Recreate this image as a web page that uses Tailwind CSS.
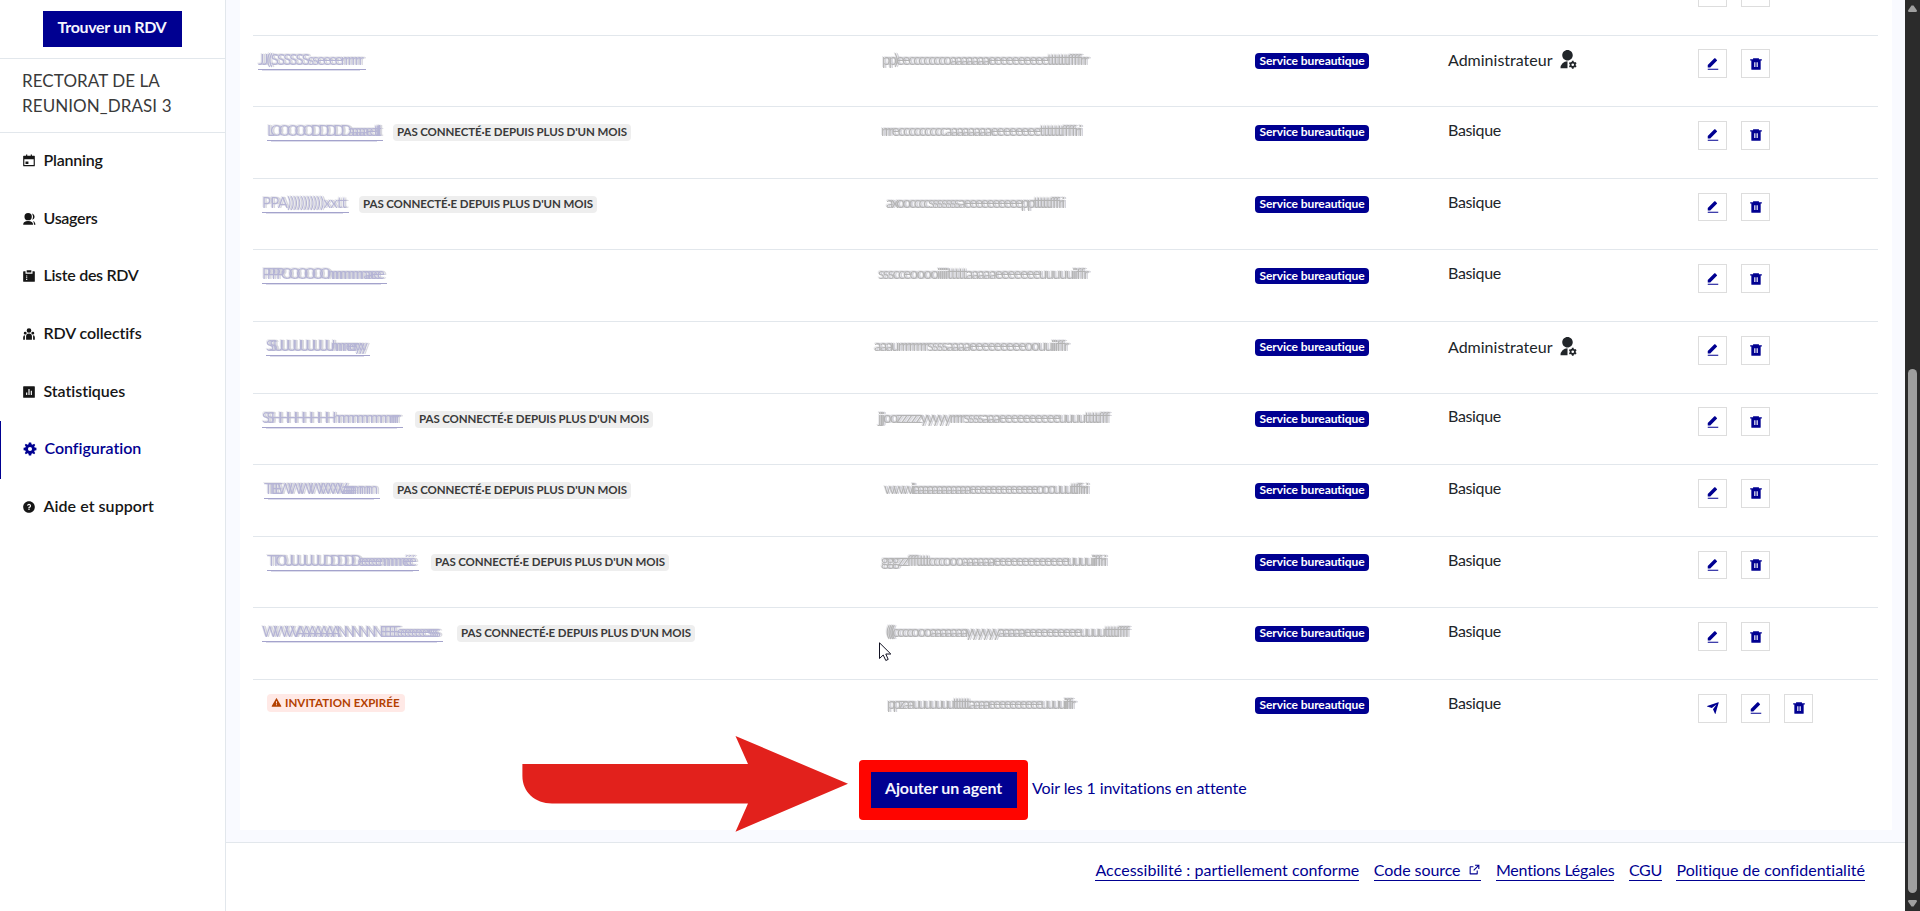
<!DOCTYPE html>
<html lang="fr">
<head>
<title>Agents - RDV Service Public</title>
<meta charset="UTF-8">
<meta name="viewport" content="width=device-width, initial-scale=1.0">
<script src="https://cdn.jsdelivr.net/npm/@tailwindcss/browser@4"></script>
<style>
  body {
    font-family: Lato, 'Open Sans', sans-serif;
    font-variant-ligatures: none;
  }
  .smudge {
    filter: drop-shadow(2px 0.5px 0.3px rgb(60 60 90 / 0.6)) drop-shadow(-1px -1px 0.5px rgb(60 60 90 / 0.3)) blur(0.3px);
  }
</style>
</head>
<body class="flex h-[911px] overflow-hidden bg-white text-base text-[#212529]">

  <!-- Icônes -->
  <svg class="hidden">
    <symbol id="i-calendar" viewBox="0 0 24 24"><path fill-rule="evenodd" d="M17 3h4a1 1 0 0 1 1 1v16a1 1 0 0 1-1 1H3a1 1 0 0 1-1-1V4a1 1 0 0 1 1-1h4V1h2v2h6V1h2v2zM4 9v10h16V9H4zm2 4h5v4H6v-4z"/></symbol>
    <symbol id="i-user" viewBox="0 0 24 24"><circle cx="10.5" cy="8" r="6.3"/><path d="M2 22c0-4.500 3-6.500 8.500-6.500S19 17.500 19 22zM17 2.500c3 1 4.500 3 4.500 5.500s-1.500 4.500-4 5.200c2-3.200 2-7.200-.5-10.700zM19 15.500c2.500 1 4 3.500 4 6.500h-2.500c0-2.500-.3-4.500-1.500-6.500z"/></symbol>
    <symbol id="i-list" viewBox="0 0 24 24"><path fill-rule="evenodd" d="M6 4v4h12V4h3a1 1 0 0 1 1 1v16a1 1 0 0 1-1 1H3a1 1 0 0 1-1-1V5a1 1 0 0 1 1-1h3zm1 13v2h2v-2H7zm0-3v2h2v-2H7zm0-3v2h2v-2H7zM8 2h8v4H8V2z"/></symbol>
    <symbol id="i-team" viewBox="0 0 24 24"><path d="M12 11a5 5 0 0 1 5 5v6H7v-6a5 5 0 0 1 5-5zm-6.700 3A7 7 0 0 0 5 16v6H2v-4.500a3.500 3.500 0 0 1 3.300-3.500zm13.400 0a3.500 3.500 0 0 1 3.300 3.500V22h-3v-6c0-.7-.1-1.400-.3-2zM5.500 8a2.500 2.500 0 1 1 0 5 2.500 2.500 0 0 1 0-5zm13 0a2.500 2.500 0 1 1 0 5 2.500 2.500 0 0 1 0-5zM12 2a4 4 0 1 1 0 8 4 4 0 0 1 0-8z"/></symbol>
    <symbol id="i-stats" viewBox="0 0 24 24"><path fill-rule="evenodd" d="M3 2h18a1 1 0 0 1 1 1v18a1 1 0 0 1-1 1H3a1 1 0 0 1-1-1V3a1 1 0 0 1 1-1zm4 11v4h2v-4H7zm4-6v10h2V7h-2zm4 3v7h2v-7h-2z"/></symbol>
    <symbol id="i-settings" viewBox="0 0 24 24"><path fill-rule="evenodd" d="M10 1h4l.6 3 1.900.8L19 3.100 21 5l-1.800 2.500.8 1.900 3 .6v4l-3 .6-.8 1.900L21 19l-2 2-2.500-1.700-1.900.8L14 23h-4l-.6-2.900-1.900-.8L5 21l-2-2 1.800-2.500-.8-1.900-3-.6v-4l3-.6.8-1.900L3 5l2-1.900 2.500 1.700L9.400 4zm2 14.500a3.500 3.500 0 1 0 0-7 3.500 3.500 0 0 0 0 7z"/></symbol>
    <symbol id="i-question" viewBox="0 0 24 24"><path fill-rule="evenodd" d="M12 22C6.477 22 2 17.523 2 12S6.477 2 12 2s10 4.477 10 10-4.477 10-10 10zm-1-7v2h2v-2h-2zm2-1.645A3.502 3.502 0 0 0 12 6.500a3.501 3.501 0 0 0-3.433 2.813l1.962.393A1.500 1.500 0 1 1 12 11.500a1 1 0 0 0-1 1V14h2v-.645z"/></symbol>
    <symbol id="i-edit" viewBox="0 0 24 24"><path d="M7.243 18H3v-4.243L14.435 2.322a1 1 0 0 1 1.414 0l2.829 2.829a1 1 0 0 1 0 1.414L7.243 18zM3 20h18v2H3v-2z"/></symbol>
    <symbol id="i-delete" viewBox="0 0 24 24"><path fill-rule="evenodd" d="M17 4h5v2h-2v15a1 1 0 0 1-1 1H5a1 1 0 0 1-1-1V6H2V4h5V2h10v2zM9 9v8h2V9H9zm4 0v8h2V9h-2z"/></symbol>
    <symbol id="i-send" viewBox="0 0 24 24"><path d="M1.946 9.315c-.522-.174-.527-.455.01-.634l19.087-6.362c.529-.176.832.12.684.638l-5.454 19.086c-.15.529-.455.547-.679.045L12 14l6-8-8 6-8.054-2.685z"/></symbol>
    <symbol id="i-admin" viewBox="0 0 24 24"><path fill-rule="evenodd" d="M12 14v8H4a8 8 0 0 1 8-8zm0-1c-3.315 0-6-2.685-6-6s2.685-6 6-6 6 2.685 6 6-2.685 6-6 6zm2.595 5.812a3.510 3.510 0 0 1 0-1.623l-.992-.573 1-1.732.992.573A3.496 3.496 0 0 1 17 14.645V13.500h2v1.145c.532.158 1.012.44 1.405.812l.992-.573 1 1.732-.992.573a3.510 3.510 0 0 1 0 1.622l.992.573-1 1.732-.992-.573a3.496 3.496 0 0 1-1.405.812V22.500h-2v-1.145a3.495 3.495 0 0 1-1.405-.812l-.992.573-1-1.732.992-.572zM18 19.500a1.500 1.500 0 1 0 0-3 1.500 1.500 0 0 0 0 3z"/></symbol>
    <symbol id="i-alert" viewBox="0 0 24 24"><path fill-rule="evenodd" d="M12.866 3l9.526 16.500a1 1 0 0 1-.866 1.500H2.474a1 1 0 0 1-.866-1.500L11.134 3a1 1 0 0 1 1.732 0zM11 16v2h2v-2h-2zm0-7v5h2V9h-2z"/></symbol>
    <symbol id="i-external" viewBox="0 0 24 24"><path d="M10 6v2H5v11h11v-5h2v6a1 1 0 0 1-1 1H4a1 1 0 0 1-1-1V7a1 1 0 0 1 1-1h6zm11-3v8h-2V6.413l-7.793 7.794-1.414-1.414L17.585 5H13V3h8z"/></symbol>
  </svg>

  <!-- Menu latéral -->
  <aside class="w-[226px] shrink-0 border-r border-[#e2e7ec]">
    <div class="h-[59px] border-b border-[#e2e7ec] pt-[11px] pl-[43px]">
      <a class="flex h-9 w-[139px] items-center justify-center bg-[#000091] pr-px pb-[5px] font-bold tracking-[-0.32px] text-[#f5f5fe]">Trouver un RDV</a>
    </div>
    <div class="h-[74px] border-b border-[#e2e7ec] pt-[9px] pl-[22px] text-[17px] leading-[25px] tracking-[0.08px] text-[#3a3a3a]">RECTORAT DE LA<br>REUNION_DRASI 3</div>
    <nav id="menu"></nav>
  </aside>

  <div class="flex min-w-0 grow flex-col">
    <!-- Liste des agents -->
    <main class="h-[843px] overflow-hidden border-b border-[#e2e7ec] bg-[#f9faff] pr-[13px] pb-3 pl-[14px]">
      <div class="flex h-[830px] flex-col justify-end bg-white pr-[14px] pl-[13px]">
        <div id="agents" class="shrink-0"></div>
        <div class="flex h-[79.400px] shrink-0 items-start pt-[9.400px] pl-[606px]">
          <div class="relative flex h-[60px] w-[169px] items-center justify-center rounded-[4px] bg-[#ff0500]">
            <a class="flex h-9 w-[146px] items-center justify-center bg-[#000091] pb-[4px] font-bold tracking-[-0.12px] text-[#f5f5fe]">Ajouter un agent</a>
            <svg class="absolute top-[-24px] left-[-337px]" width="327" height="96" viewBox="0 0 327 96" fill="#e2211c"><path d="M.4 28H226L213.500 0 326 47.800 213.500 95.700 226 67.500H30C13 67.500.4 56 .4 40z"/></svg>
          </div>
          <a class="ml-1 pt-[15.600px] tracking-[-0.1px] text-[#000091]">Voir les 1 invitations en attente</a>
        </div>
      </div>
    </main>

    <footer class="flex justify-end gap-[14.500px] pt-[15px] pr-[40px] text-[#000091]">
      <a class="h-[23px] border-b border-[#000091] tracking-[0.03px]">Accessibilité : partiellement conforme</a>
      <a class="flex h-[23px] items-start gap-2 border-b border-[#000091] tracking-[-0.08px]">Code source <svg class="mt-[5px] size-[13px] fill-current"><use href="#i-external"/></svg></a>
      <a class="h-[23px] border-b border-[#000091] tracking-[-0.22px]">Mentions Légales</a>
      <a class="h-[23px] border-b border-[#000091] tracking-[-0.3px]">CGU</a>
      <a class="h-[23px] border-b border-[#000091] tracking-[0.03px]">Politique de confidentialité</a>
    </footer>
  </div>

  <!-- Barre de défilement -->
  <div class="flex w-[15px] shrink-0 flex-col items-center bg-[#2b2b2b] text-[#9f9f9f]">
    <svg class="mt-[5px] fill-current" width="9" height="7"><path d="M3.500.5h2L9 5.500 8.500 7h-8L0 5.500z"/></svg>
    <div class="mt-[357px] h-[524px] w-[9px] rounded-full bg-[#9f9f9f]"></div>
    <svg class="mt-[7px] fill-current" width="9" height="7"><path d="M3.500 6.500h2L9 1.500 8.500 0h-8L0 1.500z"/></svg>
  </div>

  <svg class="absolute top-[642px] left-[879px]" width="13" height="20" viewBox="0 0 13 20" fill="#fff" stroke="#111122"><path d="M.5.800V16.500L4.200 13 6.800 18.500 9.200 17.400 6.800 12H11.800z"/></svg>

  <script>
    const menu = [
      { icon: 'i-calendar', label: 'Planning', spacing: -0.23 },
      { icon: 'i-user', label: 'Usagers', spacing: -0.3 },
      { icon: 'i-list', label: 'Liste des RDV', spacing: -0.3 },
      { icon: 'i-team', label: 'RDV collectifs', spacing: -0.1 },
      { icon: 'i-stats', label: 'Statistiques', spacing: -0.05 },
      { icon: 'i-settings', label: 'Configuration', spacing: -0.03, active: true },
      { icon: 'i-question', label: 'Aide et support', spacing: 0.05 }
    ];

    // name / mail: [texte brouillé, début, fin] ; badge: position du badge
    const agents = [
      { hidden: true },
      { name: ['JJ((SSSSSSsseeeerrrrrr', 258, 366], mail: ['pp)eecccccccoaaaaaaaeeeeeeeeeettttttffffrr', 882, 1091], admin: true },
      { name: ['LOOOOODDDDDaaaaaeetttli', 267, 383], mail: ['rrrecccccccccaaaaaaaaeeeeeeeettttttffffri', 881, 1084], badge: 393 },
      { name: ['PPA)))))))))))xxtt', 262, 349], mail: ['axooccccsssssssaeeeeeeeeeepptttttfffri', 886, 1067], badge: 359 },
      { name: ['PPPPOOOOOOnnnnnnnnnaaeee', 262, 387], mail: ['ssscceooooiiiiitttttaaaaaeeeeeeeuuuuuiiffr', 878, 1091] },
      { name: ['SSUUUUUUUUUnnnneerryyy', 266, 370], mail: ['aaaurrrrrrrrssssaaaaeeeeeeeeeoouuiiiffr', 874, 1071], admin: true },
      { name: ['SSHHHHHHHHnnnnnnnnnnnnrrrrr', 262, 403], mail: ['jjjoozzzzzyyyyyrrrrssssaaaeeeeeeeeeeuuuuttttfff', 878, 1112], badge: 415 },
      { name: ['TTEEWWWWVVVVVaaaaammm', 264, 380], mail: ['wwwiiaaaaaaaaaaaaeeeeeeeeeeeeeooouuuttffrri', 884, 1091], badge: 393 },
      { name: ['TTOUUUUUUDDDDDeeeeeennnnnnééé', 267, 419], mail: ['gggzzfffttttcccoooaaaaaaeeeeeeeeeeeeeuuuuiiffri', 881, 1109], badge: 431 },
      { name: ['WWVVAAAAAAANNNNNNEEEEeeeeeeeesssss', 262, 443], mail: ['((((ccccoooaaaaaaayyyyyyaaaaaeeeeeeeeeeuuuuttttffff', 886, 1132], badge: 457 },
      { mail: ['ppzaauuuuuuuttttttaaaaeeeeeeeeeeuuuuiiffr', 887, 1078], expired: true }
    ];

    const icon = (id, css) => `<svg class="${css}"><use href="#${id}"/></svg>`;
    const button = id => `<a class="flex h-[28.800px] w-[29px] items-center justify-center border border-[#dddddd]">${icon(id, 'size-[14px] fill-[#000091]')}</a>`;

    // texte brouillé : lettres serrées sur une largeur fixe, ombres décalées
    function smudge([text, from, to], origin, underline) {
      const w = to - from;
      return `<svg class="h-6 overflow-visible ${underline ? 'fill-[#1c1a80]' : 'fill-[#333333]'}" width="${w}" height="24" style="margin-left:${from - origin}px">
        <g class="smudge" opacity="${underline ? 0.32 : 0.36}"><text x="0" y="16" textLength="${w - 2}" lengthAdjust="spacing" font-size="15">${text}</text></g>
        ${underline ? `<rect x="0" y="20" width="${w}" height="1" opacity="0.4"/><rect x="4" y="21" width="${w - 10}" height="1" opacity="0.15"/>` : ''}
      </svg>`;
    }

    document.getElementById('menu').innerHTML = menu.map(m => `
      <a class="flex h-[57.600px] items-center border-l font-semibold ${m.active ? 'border-[#000091] text-[#000091] pl-[22px]' : 'border-transparent text-[#161616] pl-[21px]'}">
        ${icon(m.icon, 'mr-[7.500px] mb-px size-[14px] fill-current')}<span class="pb-[3px]" style="letter-spacing:${m.spacing}px">${m.label}</span>
      </a>`).join('');

    document.getElementById('agents').innerHTML = agents.map(a => `
      <div class="grid h-[71.600px] grid-cols-[620px_368px_193px_1fr] border-t border-[#e2e7ec] pl-[14px]">
        <div class="relative pt-[13px]">
          ${a.name ? smudge(a.name, 267, true) : ''}
          ${a.badge ? `<div class="absolute top-[17px] flex h-[17px] w-[238px] items-center justify-center rounded-[4px] bg-[#eeeeee] pb-[2px] text-[11.500px] font-bold tracking-[-0.1px] whitespace-nowrap text-[#3a3a3a]" style="left:${a.badge - 267}px">PAS CONNECTÉ·E DEPUIS PLUS D'UN MOIS</div>` : ''}
          ${a.expired ? `<div class="mt-[1px] flex h-[18px] w-[138px] items-center gap-[3px] rounded-[4px] bg-[#ffe9e6] pb-px pl-1 text-[11.500px] font-bold tracking-[0.05px] whitespace-nowrap text-[#b34000]">${icon('i-alert', 'size-[11px] fill-current')}INVITATION EXPIRÉE</div>` : ''}
        </div>
        <div class="pt-[13px]">${a.mail ? smudge(a.mail, 887, false) : ''}</div>
        <div class="pt-[17.300px]">${a.hidden ? '' : `<div class="flex h-[16.500px] w-[114px] items-center justify-center rounded-[4px] bg-[#000091] pb-px text-xs font-bold tracking-[-0.08px] text-white">Service bureautique</div>`}</div>
        <div class="grid grid-cols-[250px_1fr]">
          <div class="${a.admin ? 'pt-[12.500px]' : 'pt-[10.700px]'} flex items-start">${a.hidden ? '' : a.admin ? `Administrateur${icon('i-admin', 'ml-[4.500px] mt-[1px] size-[21px] fill-current')}` : '<span class="tracking-[-0.34px]">Basique</span>'}</div>
          <div class="flex items-start gap-[14px] pt-[13.800px]">${a.expired ? button('i-send') : ''}${button('i-edit')}${button('i-delete')}</div>
        </div>
      </div>`).join('');
  </script>
</body>
</html>
